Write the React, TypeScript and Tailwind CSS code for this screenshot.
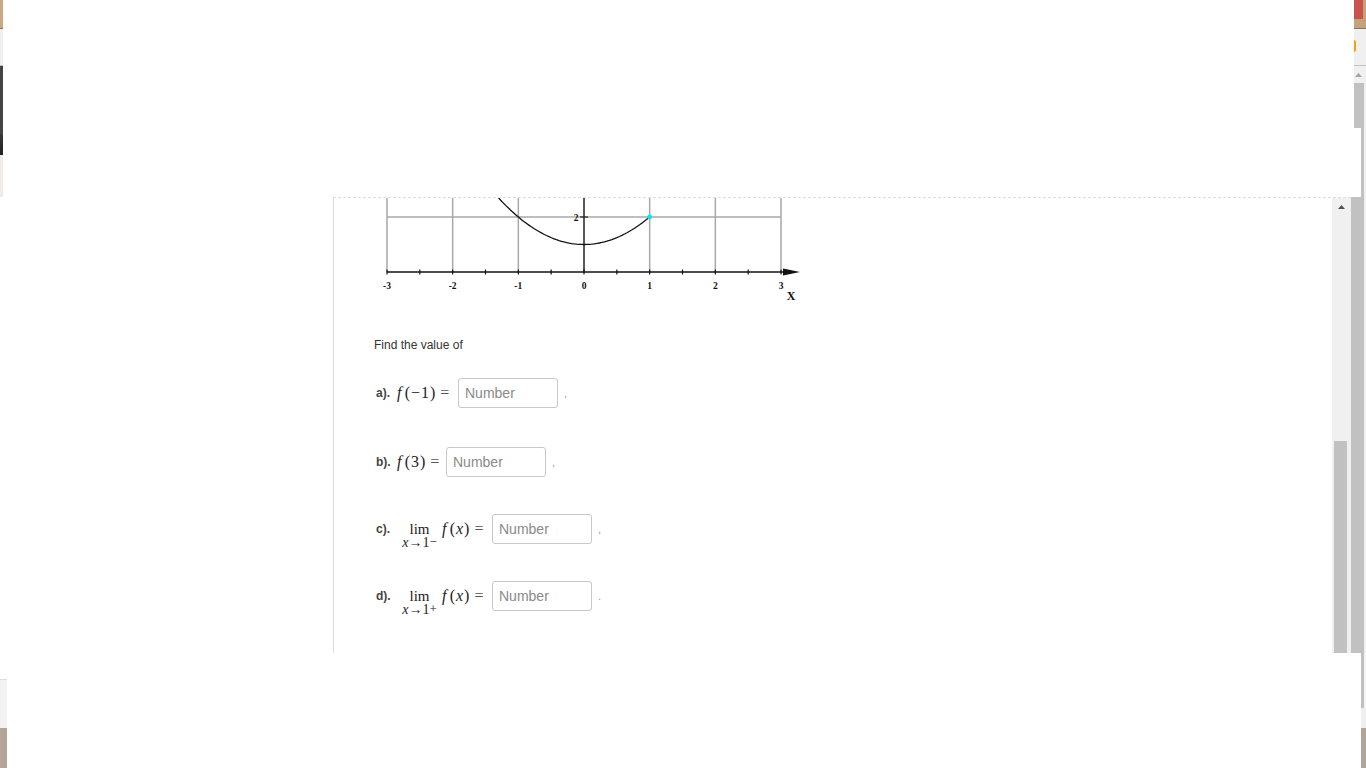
import React from "react";

const U = 65.67;
const OX = 210; // svg x of 0
const AX = 74; // svg y of x-axis
const UY = 27.5;

function curvePath() {
  const pts: string[] = [];
  for (let i = 0; i <= 60; i++) {
    const x = -1.3 + (2.3 * i) / 60;
    const y = x * x + 1;
    pts.push(`${(OX + U * x).toFixed(2)},${(AX - UY * y).toFixed(2)}`);
  }
  return "M" + pts.join(" L");
}

function Graph() {
  const grid = [-3, -2, -1, 0, 1, 2, 3];
  const halfTicks: number[] = [];
  for (let k = 0; k <= 12; k++) halfTicks.push(OX + U * (-3 + k * 0.5));
  return (
    <svg width="440" height="108" viewBox="0 0 440 108" className="block">
      {grid.map((g) =>
        g === 0 ? null : (
          <line key={g} x1={OX + U * g} y1={0} x2={OX + U * g} y2={AX} stroke="#a8a8a8" strokeWidth="1.5" />
        )
      )}
      <line x1={OX - 3 * U} y1={AX - 2 * UY} x2={OX + 3 * U} y2={AX - 2 * UY} stroke="#a8a8a8" strokeWidth="1.5" />
      <line x1={OX} y1={0} x2={OX} y2={AX} stroke="#222" strokeWidth="1.5" />
      <line x1={OX - 4} y1={AX - 2 * UY} x2={OX + 4} y2={AX - 2 * UY} stroke="#222" strokeWidth="1.2" />
      <text x={OX - 8} y={AX - 2 * UY + 3.5} fontSize="9.5" fontWeight="bold" textAnchor="middle" fontFamily="'Liberation Serif', serif" fill="#111">2</text>
      <line x1={OX - 3 * U} y1={AX} x2={410} y2={AX} stroke="#111" strokeWidth="1.6" />
      <polygon points="409,70.5 426,74 409,77.5" fill="#111" />
      {halfTicks.map((t, i) => (
        <line key={i} x1={t} y1={AX - 2.5} x2={t} y2={AX + 2.5} stroke="#111" strokeWidth="1.2" />
      ))}
      {grid.map((g) => (
        <text key={g} x={OX + U * g} y={90.5} fontSize="9.5" fontWeight="bold" textAnchor="middle" fontFamily="'Liberation Serif', serif" fill="#111">{g < 0 ? `-${-g}` : `${g}`}</text>
      ))}
      <text x={417} y={102} fontSize="12" fontWeight="bold" textAnchor="middle" fontFamily="'Liberation Serif', serif" fill="#111">X</text>
      <path d={curvePath()} fill="none" stroke="#111" strokeWidth="1.3" />
      <circle cx={OX + U} cy={AX - 2 * UY} r="2.4" fill="#00e8f0" />
    </svg>
  );
}

function NumberInput() {
  return (
    <input
      readOnly
      placeholder="Number"
      className="w-[100px] h-[30px] shrink-0 rounded-[3px] border border-[#c8c8c8] bg-white px-[6px] text-[14px] text-[#333] placeholder:text-[#8a8a8a] outline-none font-['Liberation_Sans',Arial,sans-serif]"
    />
  );
}

function Lim({ side }: { side: string }) {
  return (
    <div className="w-[45px] flex flex-col items-center pt-[14px] shrink-0 font-['Liberation_Serif',serif] text-[#222]">
      <span className="text-[15px] leading-[14px]">lim</span>
      <span className="text-[14px] leading-[14px] whitespace-nowrap">
        <i>x</i>→1<sup className="text-[13px] relative top-[-1px]">{side}</sup>
      </span>
    </div>
  );
}

const mathCls = "shrink-0 font-['Liberation_Serif',serif] text-[16px] text-[#222] whitespace-nowrap";

export default function App() {
  return (
    <div className="w-[1366px] h-[768px] overflow-hidden flex flex-col bg-white font-['Liberation_Sans',Arial,sans-serif]">
      {/* top band */}
      <div className="h-[197px] flex shrink-0">
        <div className="w-[3px] flex flex-col">
          <div className="h-[28px] bg-[#c9a97f]" />
          <div className="h-px bg-[#8c7152]" />
          <div className="h-[36px] bg-[#f0f0f0]" />
          <div className="h-px bg-[#c4c4c4]" />
          <div className="h-[68px] bg-[#444444]" />
          <div className="h-[21px] bg-gradient-to-b from-[#3a3a3a] to-[#222222]" />
          <div className="flex-1 bg-[#efece3]" />
        </div>
        <div className="flex-1 bg-white" />
        <div className="w-[12px] flex flex-col">
          <div className="h-[28px] bg-[#c4a27c] flex items-start">
            <div className="w-[9px] h-[19px] bg-[#c9524f]" />
          </div>
          <div className="h-px bg-[#8c7152]" />
          <div className="h-[36px] bg-[#f0f0f0] flex items-start">
            <div className="mt-[11px] w-[2px] h-[12px] rounded-r-full bg-[#f5a30a]" />
          </div>
          <div className="h-px bg-[#c4c4c4]" />
          <div className="h-[17px] bg-[#f0f0f0] flex items-center pl-[1px]">
            <svg width="7" height="4" viewBox="0 0 7 4" className="block">
              <polygon points="0,4 3.5,0 7,4" fill="#a3a3a3" />
            </svg>
          </div>
          <div className="h-[45px] flex">
            <div className="w-[10px] bg-[#c1c1c1]" />
            <div className="flex-1 bg-[#f0f0f0]" />
          </div>
          <div className="flex-1 flex">
            <div className="w-[7px] bg-white" />
            <div className="w-[3px] bg-[#c1c1c1]" />
            <div className="flex-1 bg-[#f0f0f0]" />
          </div>
        </div>
      </div>

      {/* middle band */}
      <div className="h-[456px] flex shrink-0">
        <div className="w-[333px] bg-white" />
        <div className="flex-1 flex border-t border-dashed border-[#dedede]">
          <div className="flex-1 border-l border-solid border-[#dcdcdc] pl-[40px] overflow-hidden">
            <Graph />
            <div className="mt-[31px] text-[12px] leading-[16px] text-[#333]">Find the value of</div>

            <div className="mt-[25px] h-[30px] flex items-center text-[#333]">
              <span className="ml-[2px] w-[21px] text-[12px] font-bold text-[#444]">a).</span>
              <span className={`w-[61px] ${mathCls}`}>
                <i>f</i>&thinsp;<span className="tracking-[1px]">(−1)</span><span className="ml-[4px] text-[#555]">=</span>
              </span>
              <NumberInput />
              <span className="ml-[6px] text-[11px] text-[#999]">,</span>
            </div>

            <div className="mt-[39px] h-[30px] flex items-center text-[#333]">
              <span className="ml-[2px] w-[21px] text-[12px] font-bold text-[#444]">b).</span>
              <span className={`w-[49px] ${mathCls}`}>
                <i>f</i>&thinsp;<span className="tracking-[1px]">(3)</span><span className="ml-[4px] text-[#555]">=</span>
              </span>
              <NumberInput />
              <span className="ml-[6px] text-[11px] text-[#999]">,</span>
            </div>

            <div className="mt-[37px] h-[30px] flex items-center text-[#333]">
              <span className="ml-[2px] w-[21px] text-[12px] font-bold text-[#444]">c).</span>
              <Lim side="−" />
              <span className={`w-[50px] ${mathCls}`}>
                <i>f</i>&thinsp;<span className="tracking-[1px]">(<i>x</i>)</span><span className="ml-[4px] text-[#555]">=</span>
              </span>
              <NumberInput />
              <span className="ml-[6px] text-[11px] text-[#999]">,</span>
            </div>

            <div className="mt-[37px] h-[30px] flex items-center text-[#333]">
              <span className="ml-[2px] w-[21px] text-[12px] font-bold text-[#444]">d).</span>
              <Lim side="+" />
              <span className={`w-[50px] ${mathCls}`}>
                <i>f</i>&thinsp;<span className="tracking-[1px]">(<i>x</i>)</span><span className="ml-[4px] text-[#555]">=</span>
              </span>
              <NumberInput />
              <span className="ml-[6px] text-[11px] text-[#999]">.</span>
            </div>
          </div>
          <div className="w-[19px] bg-[#f0f0f0] flex flex-col">
            <div className="h-[17px] flex items-center justify-center">
              <svg width="7" height="4" viewBox="0 0 7 4" className="block">
                <polygon points="0,4 3.5,0 7,4" fill="#505050" />
              </svg>
            </div>
            <div className="flex-1" />
            <div className="ml-[2px] w-[13px] h-[212px] bg-[#c1c1c1]" />
          </div>
        </div>
        <div className="w-[13px] bg-[#c1c1c1]" />
        <div className="w-[2px] bg-[#f0f0f0]" />
      </div>

      {/* bottom band */}
      <div className="flex-1 flex">
        <div className="w-[7px] flex flex-col">
          <div className="h-[26px] bg-white" />
          <div className="h-[49px] bg-[#f2f2f2] border-t border-[#dcdcdc]" />
          <div className="flex-1 bg-[#b3a699]" />
        </div>
        <div className="flex-1 bg-white" />
        <div className="w-[5px] flex flex-col">
          <div className="h-[55px] flex">
            <div className="w-[3px] bg-[#c1c1c1]" />
            <div className="flex-1 bg-[#f4f4f4]" />
          </div>
          <div className="h-[20px] bg-[#f0f0f0]" />
          <div className="flex-1 bg-[#b3a699]" />
        </div>
      </div>
    </div>
  );
}
